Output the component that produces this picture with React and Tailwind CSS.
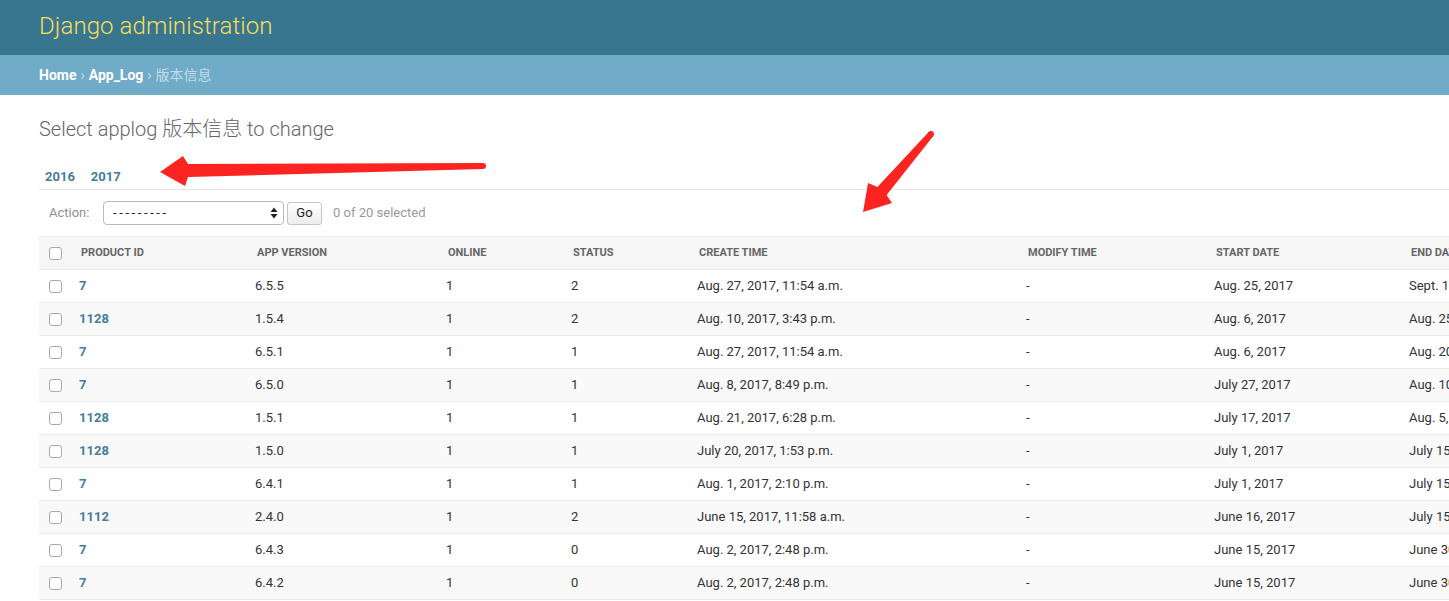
import React from "react";

const rows = [
  ["7", "6.5.5", "1", "2", "Aug. 27, 2017, 11:54 a.m.", "-", "Aug. 25, 2017", "Sept. 10, 2017"],
  ["1128", "1.5.4", "1", "2", "Aug. 10, 2017, 3:43 p.m.", "-", "Aug. 6, 2017", "Aug. 25, 2017"],
  ["7", "6.5.1", "1", "1", "Aug. 27, 2017, 11:54 a.m.", "-", "Aug. 6, 2017", "Aug. 20, 2017"],
  ["7", "6.5.0", "1", "1", "Aug. 8, 2017, 8:49 p.m.", "-", "July 27, 2017", "Aug. 10, 2017"],
  ["1128", "1.5.1", "1", "1", "Aug. 21, 2017, 6:28 p.m.", "-", "July 17, 2017", "Aug. 5, 2017"],
  ["1128", "1.5.0", "1", "1", "July 20, 2017, 1:53 p.m.", "-", "July 1, 2017", "July 15, 2017"],
  ["7", "6.4.1", "1", "1", "Aug. 1, 2017, 2:10 p.m.", "-", "July 1, 2017", "July 15, 2017"],
  ["1112", "2.4.0", "1", "2", "June 15, 2017, 11:58 a.m.", "-", "June 16, 2017", "July 15, 2017"],
  ["7", "6.4.3", "1", "0", "Aug. 2, 2017, 2:48 p.m.", "-", "June 15, 2017", "June 30, 2017"],
  ["7", "6.4.2", "1", "0", "Aug. 2, 2017, 2:48 p.m.", "-", "June 15, 2017", "June 30, 2017"],
];

function Check() {
  return <span className="block w-[13px] h-[13px] rounded-[3px] border border-[#a9a9a9] bg-white" />;
}

const headers = ["PRODUCT ID", "APP VERSION", "ONLINE", "STATUS", "CREATE TIME", "MODIFY TIME", "START DATE", "END DATE"];

export default function App() {
  return (
    <div
      className="relative w-full min-h-[601px] overflow-hidden bg-white"
      style={{ fontFamily: 'Roboto, "Noto Sans CJK SC", "Liberation Sans", sans-serif' }}
    >
      {/* header */}
      <div className="h-[55px] bg-[#38768f] flex items-center px-[39px] pb-[4px]">
        <h1 className="text-[24px] font-light text-[#f5dd5d] leading-none tracking-[0.1px]">Django administration</h1>
      </div>
      {/* breadcrumbs */}
      <div className="h-[40px] bg-[#70acc7] flex items-center px-[39px] text-[14px] text-white">
        <span className="font-bold">Home</span>
        <span className="mx-[4px] text-[#c9e1ec]">›</span>
        <span className="font-bold">App_Log</span>
        <span className="mx-[4px] text-[#c9e1ec]">›</span>
        <span className="text-[#c4dce8]">版本信息</span>
      </div>

      {/* content */}
      <div className="pl-[39px] pt-[20px]">
        <h2 className="h-[28px] leading-[28px] text-[20px] font-light text-[#666]">Select applog 版本信息 to change</h2>

        <div className="pt-[26px] pb-[4px] border-b border-[#e5e5e5] flex gap-[16px] pl-[6px] text-[13px] leading-[16px] font-bold text-[#447e9b]">
          <span>2016</span>
          <span>2017</span>
        </div>

        <div className="h-[46px] flex items-center pl-[10px] text-[13px]">
          <span className="text-[#8f8f8f] w-[54px]">Action:</span>
          <div className="w-[181px] h-[24px] border border-[#bbb] rounded-[4px] bg-white flex items-center justify-between pl-[9px] pr-[5px] text-[#222]">
            <span className="tracking-[2.6px]">---------</span>
            <svg width="8" height="12" viewBox="0 0 8 12">
              <path d="M4 0.5 L7.5 5 H0.5 Z" fill="#222" />
              <path d="M4 11.5 L7.5 7 H0.5 Z" fill="#222" />
            </svg>
          </div>
          <div className="ml-[3px] w-[35px] h-[23px] border border-[#c6c6c6] rounded-[3px] bg-gradient-to-b from-white to-[#ededed] flex items-center justify-center text-[13px] text-[#222]">
            Go
          </div>
          <span className="ml-[11px] text-[#999]">0 of 20 selected</span>
        </div>

        <table className="table-fixed border-collapse w-[1700px] text-[13px]">
          <colgroup>
            <col className="w-[30px]" />
            <col className="w-[176px]" />
            <col className="w-[191px]" />
            <col className="w-[125px]" />
            <col className="w-[126px]" />
            <col className="w-[329px]" />
            <col className="w-[188px]" />
            <col className="w-[195px]" />
            <col className="w-[340px]" />
          </colgroup>
          <thead>
            <tr className="h-[33px] bg-[#f6f6f6] border-t border-[#eee] border-b border-[#eaeaea]">
              <th className="pl-[10px] text-left align-middle"><Check /></th>
              {headers.map((h) => (
                <th key={h} className="pl-[12px] text-left text-[11px] font-bold text-[#666] whitespace-nowrap">{h}</th>
              ))}
              <th />
            </tr>
          </thead>
          <tbody>
            {rows.map((r, i) => (
              <tr key={i} className={`h-[33px] border-b border-[#eaeaea] ${i % 2 === 1 ? "bg-[#f9f9f9]" : "bg-white"}`}>
                <td className="pl-[10px] align-middle"><Check /></td>
                <td className="pl-[10px] font-bold text-[#447e9b]">{r[0]}</td>
                {r.slice(1).map((c, j) => (
                  <td key={j} className="pl-[10px] text-[#333] whitespace-nowrap">{c}</td>
                ))}
                <td />
              </tr>
            ))}
          </tbody>
        </table>
      </div>

      {/* annotation arrows */}
      <svg className="absolute left-0 top-0 pointer-events-none" width="1449" height="601">
        <polygon
          points="483,163 188,164 183,156 160,172 185,186 188,177 483,169"
          fill="#fc2420"
        />
        <circle cx="483" cy="166" r="3" fill="#fc2420" />
        <polygon
          points="928.7,132 877.4,187.1 868,183 863,212 892,203 886.6,194.9 933.3,136"
          fill="#fc2420"
        />
        <circle cx="931" cy="134" r="3" fill="#fc2420" />
      </svg>
    </div>
  );
}
